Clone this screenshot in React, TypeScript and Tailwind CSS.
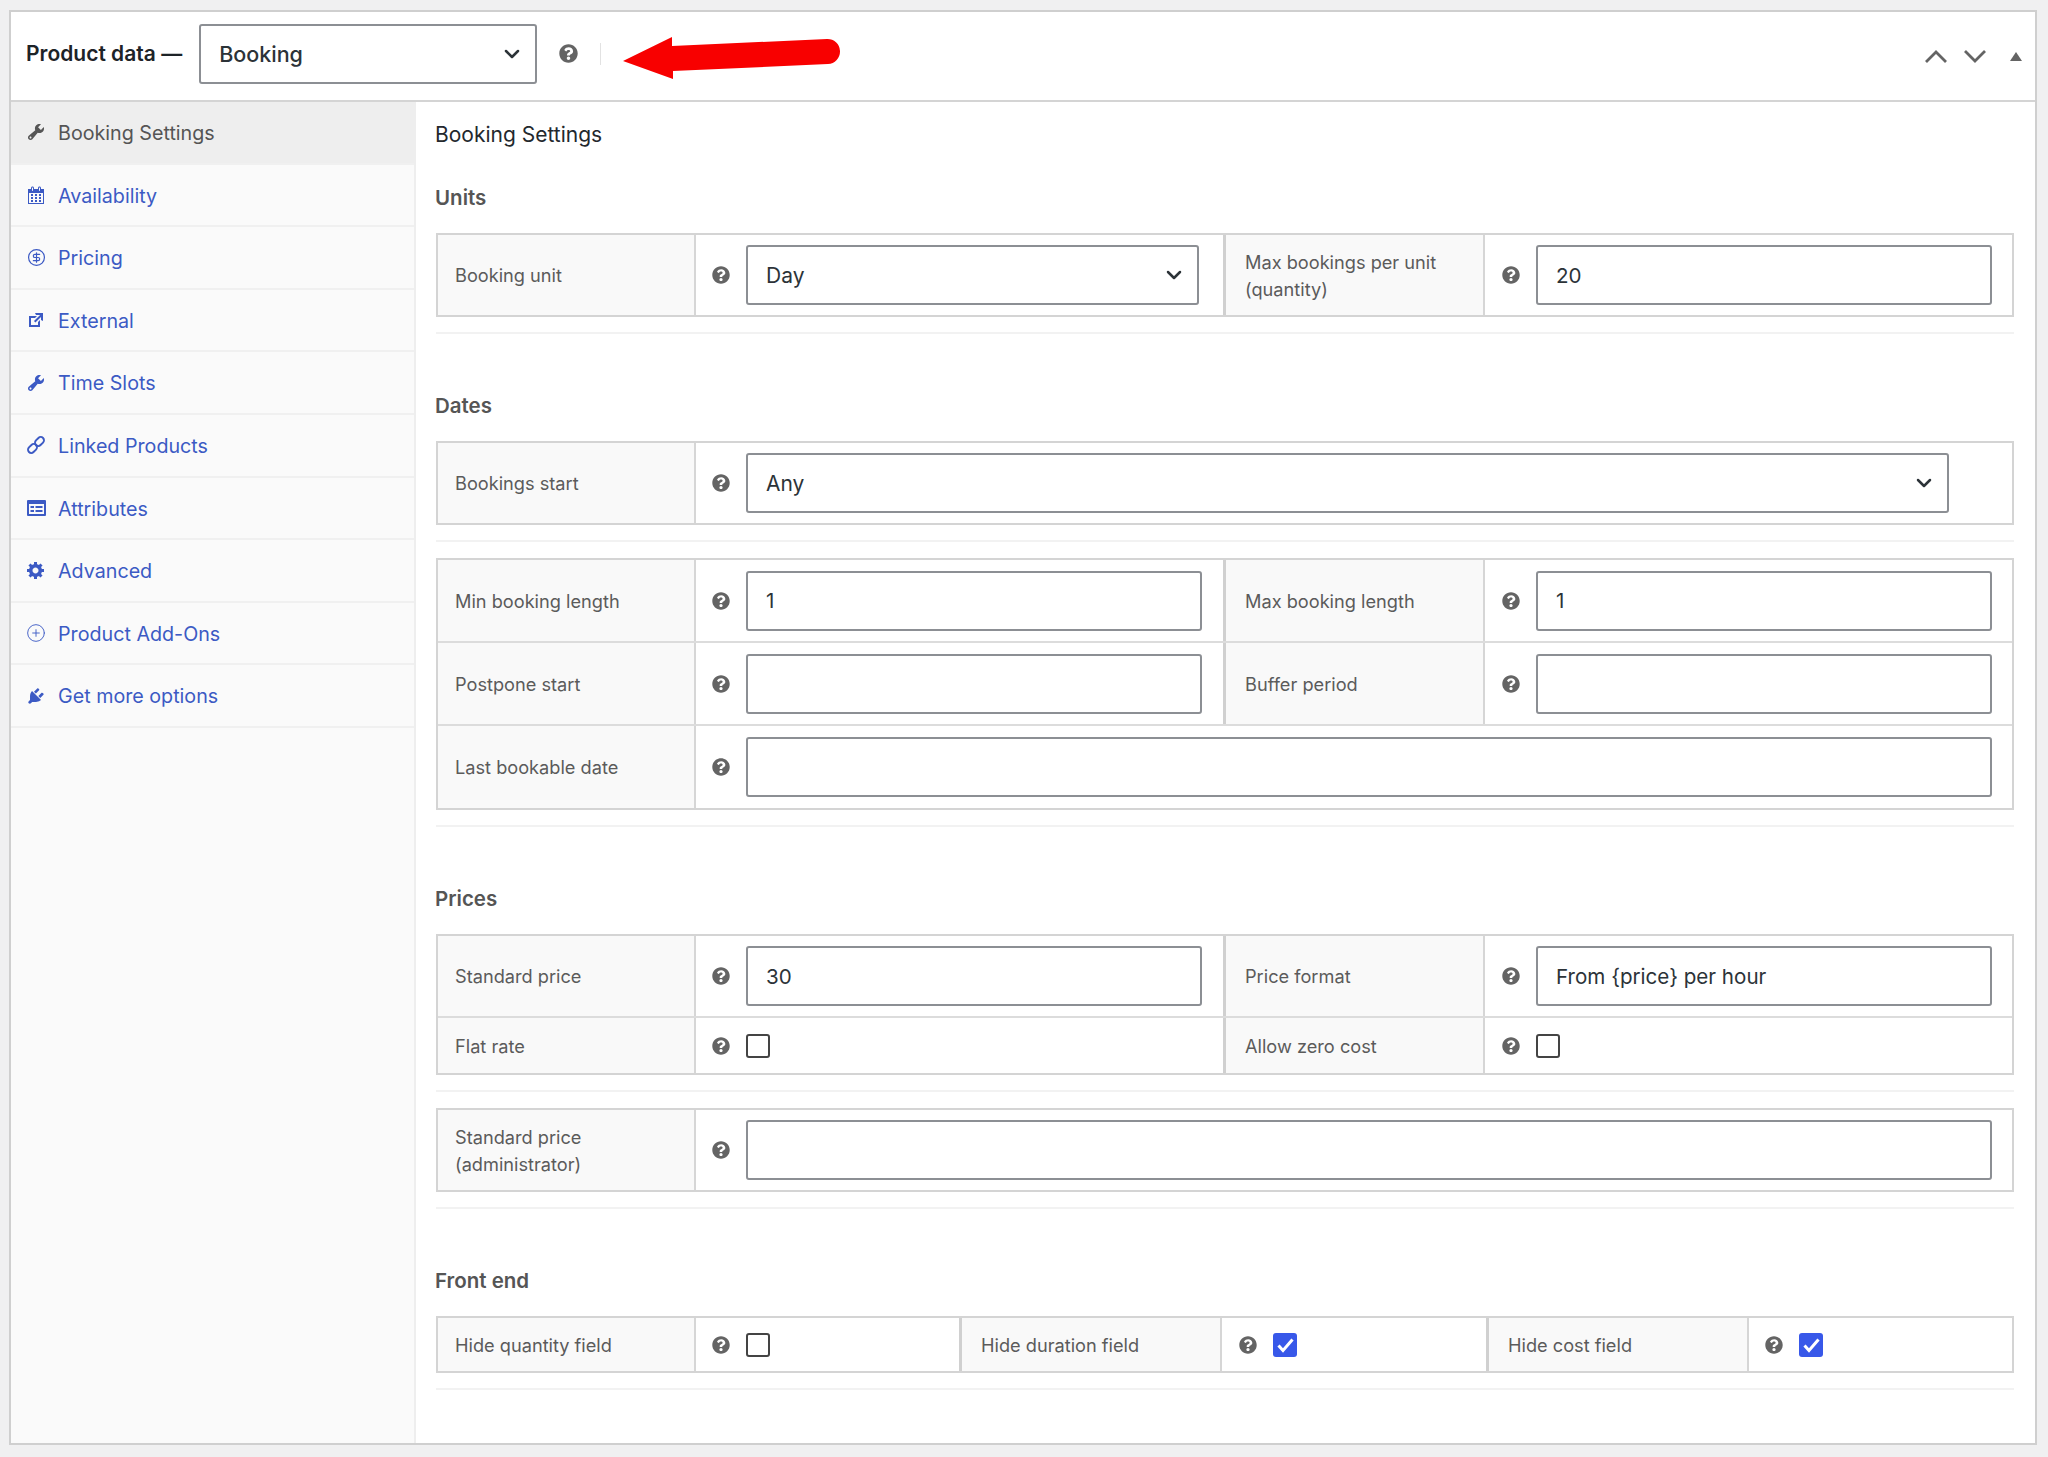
import type { ReactNode } from "react";
import { FaQuestionCircle } from "react-icons/fa";
import { LuCircleDollarSign, LuCirclePlus, LuChevronDown } from "react-icons/lu";

// dashicon style glyphs, all on a 20 unit box
const Dash = ({ d }: { d: string }) => (
  <svg viewBox="0 0 20 20" className="h-[20px] w-[20px]" fill="currentColor">
    <path d={d} fillRule="evenodd" />
  </svg>
);

const WRENCH =
  "M16.68 9.77c-1.34 1.34-3.3 1.67-4.95.99l-5.41 6.52c-.99.99-2.59.99-3.58 0s-.99-2.59 0-3.58l6.52-5.41c-.68-1.65-.35-3.61.99-4.95 1.28-1.28 3.12-1.62 4.72-1.06l-2.89 2.89 2.82 2.82 2.89-2.89c.56 1.6.22 3.44-1.06 4.72zM3.81 16.21c.4.39 1.03.39 1.42 0 .4-.4.4-1.03 0-1.43-.39-.39-1.02-.39-1.42 0-.39.4-.39 1.03 0 1.43z";
const CALENDAR =
  "M15 4h3v15H2V4h3V3c0-.41.15-.76.44-1.06.29-.29.65-.44 1.06-.44s.77.15 1.06.44c.29.3.44.65.44 1.06v1h4V3c0-.41.15-.76.44-1.06.29-.29.65-.44 1.06-.44s.77.15 1.06.44c.29.3.44.65.44 1.06v1zM6 3v2.500c0 .14.05.26.15.36.09.09.21.14.35.14s.26-.05.35-.14c.1-.1.15-.22.15-.36V3c0-.14-.05-.26-.15-.35-.09-.1-.21-.15-.35-.15s-.26.05-.35.15c-.1.09-.15.21-.15.35zm7 0v2.500c0 .14.05.26.14.36.1.09.22.14.36.14s.26-.05.36-.14c.09-.1.14-.22.14-.36V3c0-.14-.05-.26-.14-.35-.1-.1-.22-.15-.36-.15s-.26.05-.36.15c-.09.09-.14.21-.14.35zm4 15V8H3v10h14zM7 9v2H5V9h2zm2 0h2v2H9V9zm4 2V9h2v2h-2zm-6 1v2H5v-2h2zm2 0h2v2H9v-2zm4 2v-2h2v2h-2zm-6 1v2H5v-2h2zm4 2H9v-2h2v2zm4 0h-2v-2h2v2z";
const EXTERNAL = "M9 3h8v8l-2-1V6.920l-5.600 5.590-1.410-1.410L14.080 5H10zm3 12v-3l2-2v7H3V6h8L9 8H5v7h7z";
const GEAR =
  "M18 12h-2.180c-.170.70-.440 1.350-.810 1.930l1.540 1.540-2.100 2.100-1.540-1.540c-.580.360-1.230.640-1.910.810V19H8v-2.180c-.680-.170-1.330-.450-1.910-.810l-1.540 1.540-2.120-2.120 1.540-1.540c-.360-.580-.640-1.230-.810-1.910H1V9.030h2.170c.170-.680.450-1.330.810-1.910L2.440 5.580l2.100-2.100 1.540 1.540c.580-.370 1.230-.640 1.930-.810V2h3v2.180c.680.170 1.330.440 1.910.810l1.540-1.540 2.120 2.120-1.540 1.540c.360.580.640 1.230.810 1.910H18V12zm-8.500 1.500c1.660 0 3-1.340 3-3s-1.340-3-3-3-3 1.340-3 3 1.340 3 3 3z";
const PLUG =
  "M13.110 4.360L9.870 7.600 8 5.730l3.240-3.240c.350-.340 1.050-.200 1.560.310.520.510.660 1.210.310 1.560zm-8 1.770l.910-1.120 9.010 9.010-1.190.840c-.710.710-2.580 1.160-3.820 1.160H6.140L4.900 17.260c-.590.590-1.540.590-2.120 0-.590-.580-.590-1.530 0-2.120l1.240-1.240v-3.880c0-1.130.460-3.050 1.110-3.890zm7.260 3.970l3.240-3.240c.340-.350 1.040-.210 1.550.310.510.510.650 1.210.310 1.550l-3.240 3.250z";

const LinkIcon = () => (
  <svg viewBox="0 0 20 20" className="h-[20px] w-[20px]" fill="none" stroke="currentColor" strokeWidth="1.9">
    <rect x="1.500" y="10.250" width="10" height="6.500" rx="3.250" transform="rotate(-45 6.500 13.500)" />
    <rect x="8.500" y="3.250" width="10" height="6.500" rx="3.250" transform="rotate(-45 13.500 6.500)" />
  </svg>
);

const AttributesIcon = () => (
  <svg viewBox="0 0 19 16" className="h-[16px] w-[19px]">
    <rect width="19" height="16" rx="1" fill="currentColor" />
    <rect x="2" y="4" width="15" height="10" fill="#fafafa" />
    <path d="M3.500 6h3.500v2H3.500zM8.500 6h7v2h-7zM3.500 10h3.500v2H3.500zM8.500 10h7v2h-7z" fill="currentColor" />
  </svg>
);

const tabs: { label: string; icon: ReactNode }[] = [
  { label: "Booking Settings", icon: <Dash d={WRENCH} /> },
  { label: "Availability", icon: <Dash d={CALENDAR} /> },
  { label: "Pricing", icon: <LuCircleDollarSign size={19} strokeWidth={1.5} /> },
  { label: "External", icon: <Dash d={EXTERNAL} /> },
  { label: "Time Slots", icon: <Dash d={WRENCH} /> },
  { label: "Linked Products", icon: <LinkIcon /> },
  { label: "Attributes", icon: <AttributesIcon /> },
  { label: "Advanced", icon: <Dash d={GEAR} /> },
  { label: "Product Add-Ons", icon: <LuCirclePlus size={24} strokeWidth={1.1} /> },
  { label: "Get more options", icon: <Dash d={PLUG} /> },
];

const Help = () => <FaQuestionCircle size={18} className="shrink-0 text-[#646464]" />;

const Input = ({ value = "" }: { value?: string }) => (
  <input
    readOnly
    value={value}
    className="h-[60px] w-[456px] rounded-[3px] border-2 border-[#8c8f94] bg-white px-[18px] text-[20.6px] text-[#2c3338] outline-none"
  />
);

const Select = ({ value, className }: { value: string; className: string }) => (
  <div className={`flex h-[60px] items-center justify-between rounded-[3px] border-2 border-[#8c8f94] bg-white pl-[18px] pr-[11px] text-[#2c3338] ${className}`}>
    <span className="pt-[1px]">{value}</span>
    <LuChevronDown size={24} strokeWidth={2.5} />
  </div>
);

const Checkbox = ({ checked }: { checked?: boolean }) =>
  checked ? (
    <span className="h-[24px] w-[24px] rounded-[3px] bg-[#3858e9]">
      <svg viewBox="0 0 24 24" className="h-[24px] w-[24px]" fill="none" stroke="#fff" strokeWidth="3">
        <path d="M5.500 12.500l4.500 5 9.500-11" />
      </svg>
    </span>
  ) : (
    <span className="h-[24px] w-[24px] rounded-[3px] border-2 border-[#444]" />
  );

const Label = ({ children, first, className = "w-[259px]" }: { children: ReactNode; first?: boolean; className?: string }) => (
  <div className={`flex shrink-0 items-center border-r-2 border-[#d6d6d6] bg-[#f9f9f9] pr-3 pt-[1px] text-[18.200px] leading-[27px] text-[#5b5b5b] ${first ? "w-[258px] pl-[17px]" : `pl-[19px] ${className}`}`}>
    {children}
  </div>
);

// left half of a two column row, ends on the thick divider
const Half = ({ children, className = "w-[530px] pl-[16px]" }: { children: ReactNode; className?: string }) => (
  <div className={`flex shrink-0 items-center gap-[16px] border-r-[3px] border-[#d0d0d0] ${className}`}>
    <Help />
    {children}
  </div>
);

const Rest = ({ children, pl = "pl-[17px]" }: { children?: ReactNode; pl?: string }) => (
  <div className={`flex flex-1 items-center gap-[16px] pr-[20px] ${pl}`}>
    <Help />
    {children}
  </div>
);

const Row = ({ h, children, last }: { h: string; children: ReactNode; last?: boolean }) => (
  <div className={`flex ${h} ${last ? "" : "border-b-2 border-[#dcdcdc]"}`}>{children}</div>
);

const Table = ({ children }: { children: ReactNode }) => (
  <div className="border-2 border-[#d4d4d4]">{children}</div>
);

const Rule = () => <div className="mb-[16px] mt-[15px] h-[2px] bg-[#f2f2f2]" />;

const Section = ({ title }: { title: string }) => (
  <h3 className="-ml-[1px] mb-[5px] mt-[40px] flex h-[62px] items-center pt-[3px] text-[20.500px] font-semibold text-[#555]">{title}</h3>
);

export default function App() {
  return (
    <div className="min-h-[1457px] bg-[#f0f0f1] pb-[12px] pl-[9px] pr-[11px] pt-[10px] font-['Inter',sans-serif]">
      <div className="relative border-2 border-[#cfcfcf] bg-white">
        {/* header */}
        <div className="flex h-[90px] items-center border-b-2 border-[#d4d4d4] pb-[4px] pl-[15px]">
          <span className="text-[21px] font-semibold text-[#1d2327]">Product data —</span>
          <Select value="Booking" className="ml-[17px] w-[338px] text-[21.500px] font-medium" />
          <FaQuestionCircle size={19} className="-mt-[2px] ml-[22px] text-[#646464]" />
          <span className="ml-[22px] h-[22px] w-px bg-[#e2e2e2]" />
          <div className="ml-auto flex items-center pr-[13px] pt-[5px] text-[#646464]">
            <svg viewBox="0 0 22 13" className="h-[13px] w-[22px]" fill="none" stroke="currentColor" strokeWidth="2.800">
              <path d="M1 12 11 2l10 10" />
            </svg>
            <svg viewBox="0 0 22 13" className="ml-[17px] h-[13px] w-[22px]" fill="none" stroke="currentColor" strokeWidth="2.800">
              <path d="M1 1l10 10L21 1" />
            </svg>
            <svg viewBox="0 0 12 9" className="ml-[24px] h-[9px] w-[12px]" fill="currentColor">
              <path d="M6 0l6 9H0z" />
            </svg>
          </div>
        </div>

        {/* red arrow drawn over the header */}
        <svg viewBox="0 0 224 48" className="absolute left-[609px] top-[22px] h-[48px] w-[224px]" fill="#f80000">
          <path d="M3 27 52 3v9l155-7a12.500 12.500 0 0 1 1 25L53 37v8Z" />
        </svg>

        <div className="flex">
          {/* tabs */}
          <div className="w-[405px] shrink-0 border-r-2 border-[#eeeeee] bg-[#fafafa]">
            {tabs.map((t, i) => (
              <div
                key={t.label}
                className={`flex h-[62.600px] items-center border-b-2 border-[#f0f0f0] text-[19.700px] ${i === 0 ? "bg-[#eeeeee] text-[#555]" : "text-[#3c5ac4]"}`}
              >
                <span className="ml-[15px] mr-[12px] flex w-[20px] shrink-0 justify-center">{t.icon}</span>
                <span className="pt-[3px]">{t.label}</span>
              </div>
            ))}
          </div>

          {/* panel content */}
          <div className="min-w-0 flex-1 pb-[37px] pl-[20px] pr-[21px]">
            <h2 className="-ml-[1px] flex h-[64px] items-center pt-[2px] text-[21px] text-[#23282d]">Booking Settings</h2>

            <h3 className="-ml-[1px] mb-[5px] flex h-[62px] items-center pt-[3px] text-[20.500px] font-semibold text-[#555]">Units</h3>
            <Table>
              <Row h="h-[80px]" last>
                <Label first>Booking unit</Label>
                <Half>
                  <Select value="Day" className="w-[453px] text-[21px]" />
                </Half>
                <Label>
                  <span>
                    Max bookings per unit
                    <br />
                    (quantity)
                  </span>
                </Label>
                <Rest>
                  <Input value="20" />
                </Rest>
              </Row>
            </Table>
            <Rule />

            <Section title="Dates" />
            <Table>
              <Row h="h-[80px]" last>
                <Label first>Bookings start</Label>
                <div className="flex flex-1 items-center gap-[16px] pl-[16px] pr-[63px]">
                  <Help />
                  <Select value="Any" className="flex-1 text-[21px]" />
                </div>
              </Row>
            </Table>
            <Rule />

            <Table>
              <Row h="h-[83px]">
                <Label first>Min booking length</Label>
                <Half>
                  <Input value="1" />
                </Half>
                <Label>Max booking length</Label>
                <Rest>
                  <Input value="1" />
                </Rest>
              </Row>
              <Row h="h-[83px]">
                <Label first>Postpone start</Label>
                <Half>
                  <Input />
                </Half>
                <Label>Buffer period</Label>
                <Rest>
                  <Input />
                </Rest>
              </Row>
              <Row h="h-[82px]" last>
                <Label first>Last bookable date</Label>
                <div className="flex flex-1 items-center gap-[16px] pl-[16px] pr-[20px]">
                  <Help />
                  <input readOnly value="" className="h-[60px] flex-1 rounded-[3px] border-2 border-[#8c8f94] bg-white" />
                </div>
              </Row>
            </Table>
            <Rule />

            <Section title="Prices" />
            <Table>
              <Row h="h-[82px]">
                <Label first>Standard price</Label>
                <Half>
                  <Input value="30" />
                </Half>
                <Label>Price format</Label>
                <Rest>
                  <Input value="From {price} per hour" />
                </Rest>
              </Row>
              <Row h="h-[55px]" last>
                <Label first>Flat rate</Label>
                <Half>
                  <Checkbox />
                </Half>
                <Label>Allow zero cost</Label>
                <Rest>
                  <Checkbox />
                </Rest>
              </Row>
            </Table>
            <Rule />

            <Table>
              <Row h="h-[80px]" last>
                <Label first>
                  <span>
                    Standard price
                    <br />
                    (administrator)
                  </span>
                </Label>
                <div className="flex flex-1 items-center gap-[16px] pl-[16px] pr-[20px]">
                  <Help />
                  <input readOnly value="" className="h-[60px] flex-1 rounded-[3px] border-2 border-[#8c8f94] bg-white" />
                </div>
              </Row>
            </Table>
            <Rule />

            <Section title="Front end" />
            <Table>
              <Row h="h-[53px]" last>
                <Label first>Hide quantity field</Label>
                <Half className="w-[266px] pl-[16px]">
                  <Checkbox />
                </Half>
                <Label className="w-[260px]">Hide duration field</Label>
                <Half className="w-[267px] pl-[17px]">
                  <Checkbox checked />
                </Half>
                <Label className="w-[260px]">Hide cost field</Label>
                <Rest pl="pl-[16px]">
                  <Checkbox checked />
                </Rest>
              </Row>
            </Table>
            <Rule />
          </div>
        </div>
      </div>
    </div>
  );
}
